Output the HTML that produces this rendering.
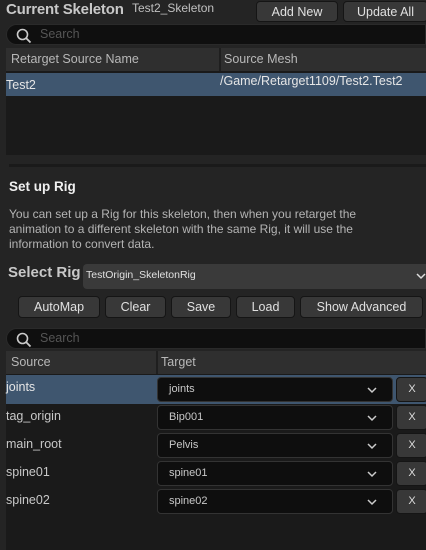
<!DOCTYPE html>
<html><head><meta charset="utf-8"><style>
*{box-sizing:border-box;margin:0;padding:0}
body{width:426px;height:550px;background:#242424;font-family:"Liberation Sans",sans-serif;color:#c0c0c0;position:relative;overflow:hidden;font-size:12px}
.a{position:absolute}
.btn{position:absolute;background:#383838;border:1px solid #151515;border-radius:4px;color:#e0e0e0;font-size:12.5px;text-align:center;line-height:20px}
.search{position:absolute;left:6px;right:0;height:21px;background:#0f0f0f;border:1px solid #2a2a2a;border-radius:11px 0 0 11px;color:#555;font-size:12.5px;line-height:19px;padding-left:33px}
.search svg{position:absolute;left:9px;top:3px}
.hdr{position:absolute;left:6px;right:0;height:23px;background:#2f2f2f;color:#b8b8b8;font-size:12.5px;line-height:23px}
.sel{background:#3f566f}
.combo{position:absolute;left:157px;width:236px;height:25px;background:#0e0e0e;border:1px solid #333;border-radius:4px;color:#c8c8c8;font-size:11px;line-height:23px;padding-left:11px}
.combo svg{position:absolute;right:15px;top:9px}
.x{position:absolute;left:396px;width:32px;height:25px;background:#383838;border:1px solid #151515;border-radius:4px;color:#ddd;font-size:11px;text-align:center;line-height:23px}
.src{position:absolute;left:6px;color:#c8c8c8;font-size:12.5px}
</style></head><body>
<div class="a" style="left:6px;top:0;font-weight:bold;font-size:15px;color:#c8c8c8;line-height:20px;letter-spacing:-0.2px">Current Skeleton</div>
<div class="a" style="left:132px;top:0;font-size:12px;color:#c0c0c0;line-height:16px">Test2_Skeleton</div>
<div class="btn" style="left:256px;top:1px;width:82px;height:21px">Add New</div>
<div class="btn" style="left:343px;top:1px;width:85px;height:21px">Update All</div>
<div class="search" style="top:24px">Search<svg width="16" height="16" viewBox="0 0 16 16"><circle cx="6.5" cy="6.5" r="5" fill="none" stroke="#ccc" stroke-width="1.6"/><path d="M10 10l4.5 4.5" stroke="#ccc" stroke-width="1.8"/></svg></div>
<div class="a" style="left:6px;right:0;top:48px;height:107px;background:#1a1a1a"></div>
<div class="hdr" style="top:48px"><span style="padding-left:5px">Retarget Source Name</span><span class="a" style="left:213px;top:0;width:2px;height:23px;background:#1f1f1f"></span><span class="a" style="left:218px">Source Mesh</span></div>
<div class="a sel" style="left:6px;right:0;top:73px;height:23px;color:#e6e6e6;font-size:12.5px"><span class="a" style="left:0;top:5px">Test2</span><span class="a" style="left:214px;top:1px">/Game/Retarget1109/Test2.Test2</span></div>
<div class="a" style="left:9px;right:0;top:164px;height:3px;background:#1a1a1a"></div>
<div class="a" style="left:9px;top:179px;font-weight:bold;font-size:13.5px;color:#f0f0f0">Set up Rig</div>
<div class="a" style="left:9px;top:207px;font-size:12px;line-height:15px;color:#b4b4b4;width:420px">You can set up a Rig for this skeleton, then when you retarget the<br>animation to a different skeleton with the same Rig, it will use the<br>information to convert data.</div>
<div class="a" style="left:8px;top:264px;font-weight:bold;font-size:15px;color:#c8c8c8">Select Rig</div>
<div class="a" style="left:83px;right:0;top:264px;height:25px;background:#3a3a3a;border-radius:4px 0 0 4px;color:#e0e0e0;font-size:10.5px;line-height:22px;padding-left:3px">TestOrigin_SkeletonRig<svg class="a" style="left:333px;top:9px" width="10" height="7" viewBox="0 0 10 7"><path d="M1 1l4 4 4-4" fill="none" stroke="#ddd" stroke-width="1.5"/></svg></div>
<div class="btn" style="left:18px;top:296px;width:82px;height:22px">AutoMap</div>
<div class="btn" style="left:105px;top:296px;width:61px;height:22px">Clear</div>
<div class="btn" style="left:171px;top:296px;width:60px;height:22px">Save</div>
<div class="btn" style="left:236px;top:296px;width:59px;height:22px">Load</div>
<div class="btn" style="left:300px;top:296px;width:123px;height:22px">Show Advanced</div>
<div class="search" style="top:328px">Search<svg width="16" height="16" viewBox="0 0 16 16"><circle cx="6.5" cy="6.5" r="5" fill="none" stroke="#ccc" stroke-width="1.6"/><path d="M10 10l4.5 4.5" stroke="#ccc" stroke-width="1.8"/></svg></div>
<div class="a" style="left:6px;right:0;top:351px;height:199px;background:#1a1a1a"></div>
<div class="hdr" style="top:351px"><span style="padding-left:5px">Source</span><span class="a" style="left:150px;top:0;width:2px;height:23px;background:#1f1f1f"></span><span class="a" style="left:155px">Target</span></div>
<div class="a sel" style="left:6px;right:0;top:375px;height:29px"></div>
<div class="src" style="top:380px;color:#e6e6e6">joints</div>
<div class="src" style="top:409px">tag_origin</div>
<div class="src" style="top:437px">main_root</div>
<div class="src" style="top:465px">spine01</div>
<div class="src" style="top:493px">spine02</div>
<div class="combo" style="top:377px">joints<svg width="10" height="7" viewBox="0 0 10 7"><path d="M1 1l4 4 4-4" fill="none" stroke="#ccc" stroke-width="1.5"/></svg></div>
<div class="combo" style="top:405px">Bip001<svg width="10" height="7" viewBox="0 0 10 7"><path d="M1 1l4 4 4-4" fill="none" stroke="#ccc" stroke-width="1.5"/></svg></div>
<div class="combo" style="top:433px">Pelvis<svg width="10" height="7" viewBox="0 0 10 7"><path d="M1 1l4 4 4-4" fill="none" stroke="#ccc" stroke-width="1.5"/></svg></div>
<div class="combo" style="top:461px">spine01<svg width="10" height="7" viewBox="0 0 10 7"><path d="M1 1l4 4 4-4" fill="none" stroke="#ccc" stroke-width="1.5"/></svg></div>
<div class="combo" style="top:489px">spine02<svg width="10" height="7" viewBox="0 0 10 7"><path d="M1 1l4 4 4-4" fill="none" stroke="#ccc" stroke-width="1.5"/></svg></div>
<div class="x" style="top:377px">X</div>
<div class="x" style="top:405px">X</div>
<div class="x" style="top:433px">X</div>
<div class="x" style="top:461px">X</div>
<div class="x" style="top:489px">X</div>
</body></html>
